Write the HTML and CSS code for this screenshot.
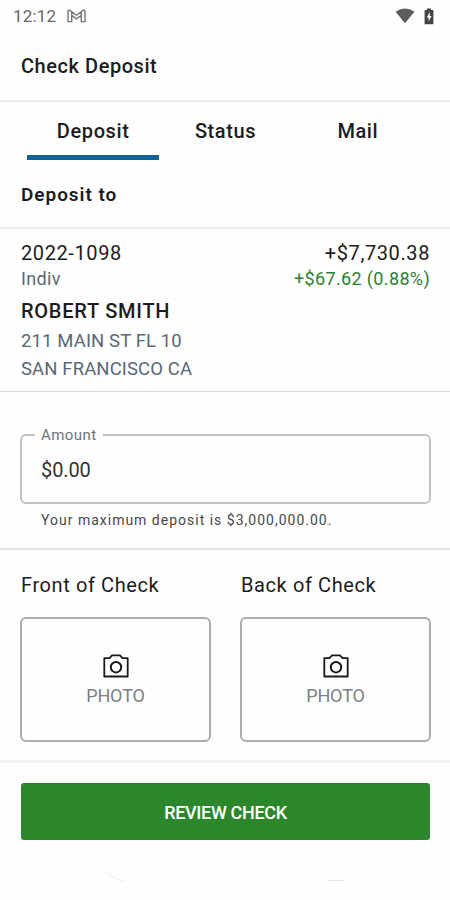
FILE: index.html
```html
<!DOCTYPE html>
<html lang="en">
<head>
<meta charset="utf-8">
<title>Check Deposit</title>
<link rel="stylesheet" href="styles.css">
</head>
<body>
<div class="statusbar">
  <span class="clock">12:12</span>
  <svg class="mail" width="19" height="14" viewBox="0 0 19 14"><path d="M1 12.6V2.2Q1 .8 2.6 1.2L9.5 6.2 16.4 1.2Q18 .8 18 2.2V12.6H14.3V6.4L9.5 9.8 4.7 6.4V12.6ZM4.7 3V6.4M14.3 3V6.4" fill="none" stroke="#777" stroke-width="1.4"/></svg>
  <svg class="wifi" width="20" height="16" viewBox="0 0 20 16"><path d="M.6 3.8Q10-2.8 19.4 3.8L10 15.2Z" fill="#5c5c5c"/></svg>
  <svg class="battery" width="10" height="17" viewBox="0 0 10 17"><path d="M1.3 2H3V.6H7V2H8.7Q9.4 2 9.4 2.8V16.3H.6V2.8Q.6 2 1.3 2Z" fill="#444"/><path d="M5.8 4 2.7 9.5H4.6V13.5L7.5 7.9H5.8Z" fill="#fff"/></svg>
</div>
<header class="title"><span>Check Deposit</span></header>
<nav class="tabs">
  <div class="tab active"><span>Deposit</span></div>
  <div class="tab"><span>Status</span></div>
  <div class="tab"><span>Mail</span></div>
</nav>
<h2 class="section"><span>Deposit to</span></h2>
<section class="account">
  <div class="row main"><span class="number">2022-1098</span><span class="balance">+$7,730.38</span></div>
  <div class="row sub"><span class="type">Indiv</span><span class="gain">+$67.62 (0.88%)</span></div>
  <div class="name"><span>ROBERT SMITH</span></div>
  <div class="addr"><span class="street">211 MAIN ST FL 10</span></div>
  <div class="addr"><span class="city">SAN FRANCISCO CA</span></div>
</section>
<section class="amount">
  <fieldset class="field"><legend><span>Amount</span></legend><span class="value">$0.00</span></fieldset>
  <div class="hint"><span>Your maximum deposit is $3,000,000.00.</span></div>
</section>
<section class="photos">
  <div class="side">
    <div class="label"><span>Front of Check</span></div>
    <div class="photo">
      <svg width="26" height="24" viewBox="0 0 26 24"><path d="M1.3 4.2H6.5L9 1.3H17L19.5 4.2H24.7V22.5H1.3Z" fill="none" stroke="#1a1a1a" stroke-width="1.8" stroke-linejoin="round"/><circle cx="13" cy="13.2" r="5.2" fill="none" stroke="#1a1a1a" stroke-width="2"/></svg>
      <span>PHOTO</span>
    </div>
  </div>
  <div class="side">
    <div class="label"><span class="back">Back of Check</span></div>
    <div class="photo">
      <svg width="26" height="24" viewBox="0 0 26 24"><path d="M1.3 4.2H6.5L9 1.3H17L19.5 4.2H24.7V22.5H1.3Z" fill="none" stroke="#1a1a1a" stroke-width="1.8" stroke-linejoin="round"/><circle cx="13" cy="13.2" r="5.2" fill="none" stroke="#1a1a1a" stroke-width="2"/></svg>
      <span>PHOTO</span>
    </div>
  </div>
</section>
<footer class="actions">
  <div class="button"><span>REVIEW CHECK</span></div>
  <div class="sysnav">
    <svg width="20" height="12" viewBox="0 0 20 12"><path d="M1 1 9 6 18 9" fill="none" stroke="#ececec"/></svg>
    <svg width="20" height="12" viewBox="0 0 20 12"><path d="M1 8.500H19" fill="none" stroke="#e4e4e4"/></svg>
  </div>
</footer>
</body>
</html>
```

FILE: styles.css
```css
* { box-sizing: border-box; }
body { margin: 0; width: 450px; height: 900px; overflow: hidden; background: #fefefe; color: #1c1c1c; font-family: Roboto, "Liberation Sans", sans-serif; font-size: 20px; }
svg { display: block; flex: none; }
span { white-space: nowrap; }
.statusbar { height: 32px; padding: 0 16px 0 13px; display: flex; align-items: center; }
.clock { font-size: 17px; color: #666; letter-spacing: .2px; }
.mail { margin-left: 11px; }
.wifi { margin-left: auto; margin-right: 9px; }
.title { height: 70px; padding: 0 21px; border-bottom: 2px solid #ebebeb; line-height: 69px; font-weight: 500; letter-spacing: .55px; }
.tabs { height: 58px; padding: 0 26px 0 27px; display: grid; grid-template-columns: repeat(3, 1fr); text-align: center; line-height: 59px; font-weight: 500; letter-spacing: .6px; }
.active { height: 58px; border-bottom: 5px solid #10629a; }
.section { margin: 0; height: 69px; padding: 0 21px; border-bottom: 2px solid #ebebeb; font-size: 19px; font-weight: 600; line-height: 70px; letter-spacing: .95px; }
.account { height: 163px; padding: 11px 20px 0 21px; border-bottom: 1px solid #dcdcdc; }
.row { display: flex; justify-content: space-between; }
.main { line-height: 26px; letter-spacing: .6px; }
.sub { line-height: 26px; font-size: 18px; color: #5b6775; letter-spacing: .35px; }
.gain { color: #2c812f; }
.name { line-height: 38px; font-weight: 500; letter-spacing: .75px; }
.addr { line-height: 28px; font-size: 18.500px; color: #5b6775; letter-spacing: .12px; }
.street { display: block; margin-top: -3px; }
.amount { height: 158px; padding: 33px 19px 0 20px; border-bottom: 2px solid #e4e4e4; }
.field { margin: 0; height: 79px; padding: 0 19px; border: 2px solid #c2c2c2; border-radius: 6px; }
legend { padding: 0 6px; margin-left: -6px; font-size: 15px; line-height: 20px; letter-spacing: .45px; color: #6a7380; }
.value { display: block; line-height: 51px; color: #333; letter-spacing: -.1px; }
.hint { padding-left: 21px; margin-top: 7px; line-height: 18px; font-size: 14px; color: #484848; letter-spacing: 1px; }
.photos { height: 213px; padding: 0 19px 0 20px; display: grid; grid-template-columns: 191px 191px; justify-content: space-between; border-bottom: 3px solid #f2f2f2; }
.label { height: 67px; padding-left: 1px; line-height: 70px; letter-spacing: .6px; }
.photo { height: 125px; border: 2px solid #acaeae; border-radius: 6px; display: flex; flex-direction: column; align-items: center; padding-top: 35px; font-size: 18px; line-height: 35px; letter-spacing: -.1px; color: #808080; }
.actions { padding: 20px 20px 0 21px; }
.button { height: 57px; border-radius: 3px; background: #2c872c; color: #fff; text-align: center; line-height: 60px; font-size: 18px; font-weight: 500; letter-spacing: -.33px; }
.sysnav { padding: 32px 84px 0 85px; display: flex; justify-content: space-between; }
```
